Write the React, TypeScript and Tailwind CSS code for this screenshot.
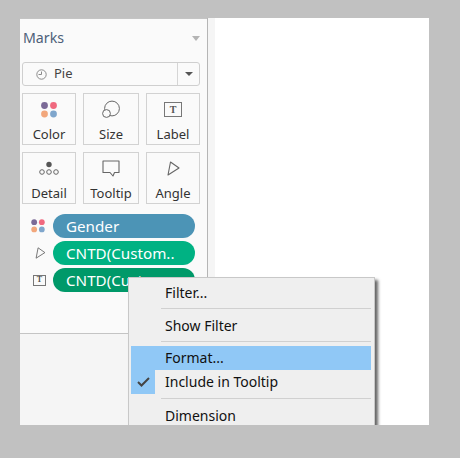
const font = { fontFamily: '"Noto Sans", "Open Sans", sans-serif' };

function Dots({ size = 1 }: { size?: number }) {
  return (
    <svg width={18} height={18} viewBox="0 0 18 18" style={{ transform: `scale(${size})` }}>
      <circle cx="4.5" cy="4.5" r="3.4" fill="#7b6a97" />
      <circle cx="13.5" cy="4.5" r="3.4" fill="#f0697f" />
      <circle cx="4.5" cy="13" r="3.4" fill="#f2a77c" />
      <circle cx="13.5" cy="13" r="3.4" fill="#7fa6cc" />
    </svg>
  );
}

function SizeIcon() {
  return (
    <svg width={20} height={20} viewBox="0 0 20 20" fill="none" stroke="#666" strokeWidth="1">
      <circle cx="11" cy="8.5" r="7.4" />
      <circle cx="5.5" cy="13.5" r="3.9" fill="#fafafa" />
    </svg>
  );
}

function LabelIcon() {
  return (
    <div
      className="w-[18px] h-[15px] flex items-center justify-center border-[1.5px] border-[#777] text-[#555] font-bold text-[10px] leading-none"
      style={{ fontFamily: '"Liberation Serif", serif' }}
    >
      T
    </div>
  );
}

function SmallLabelIcon() {
  return (
    <div
      className="w-[13px] h-[11px] flex items-center justify-center border border-[#777] text-[#555] font-bold text-[8px] leading-none"
      style={{ fontFamily: '"Liberation Serif", serif' }}
    >
      T
    </div>
  );
}

function DetailIcon() {
  return (
    <svg width={20} height={16} viewBox="0 0 20 16" fill="none" stroke="#666" strokeWidth="1">
      <circle cx="10" cy="3.5" r="2.7" fill="#555" stroke="none" />
      <circle cx="3" cy="11" r="2.3" />
      <circle cx="10" cy="11" r="2.3" />
      <circle cx="17" cy="11" r="2.3" />
    </svg>
  );
}

function TooltipIcon() {
  return (
    <svg width={18} height={17} viewBox="0 0 18 17" fill="none" stroke="#666" strokeWidth="1.1">
      <path d="M1 1h16v11.5h-4.5l-1.5 3.5-3-3.5h-7z" strokeLinejoin="round" />
    </svg>
  );
}

function AngleIcon({ w = 13, h = 15 }: { w?: number; h?: number }) {
  return (
    <svg width={w} height={h} viewBox="0 0 13 15" fill="none" stroke="#666" strokeWidth="1.1">
      <path d="M3.5 1l8.5 6-11 7z" strokeLinejoin="round" />
    </svg>
  );
}

function MarkCard({ icon, label }: { icon: React.ReactNode; label: string }) {
  return (
    <div className="h-[52px] flex flex-col items-center border border-[#d2d2d2] bg-[#fafafa]">
      <div className="h-[31px] flex items-center justify-center">{icon}</div>
      <div className="mt-[1px] text-[13px] leading-[17px] text-[#333]">{label}</div>
    </div>
  );
}

function Pill({ icon, label, color }: { icon: React.ReactNode; label: string; color: string }) {
  return (
    <div className="flex items-center h-[24px] gap-[6px]">
      <div className="w-[25px] flex justify-end">{icon}</div>
      <div className={`w-[142px] h-[24px] rounded-full text-white text-[15.2px] leading-[24px] pl-[13px] whitespace-nowrap overflow-hidden ${color}`}>
        {label}
      </div>
    </div>
  );
}

function Sep({ className = "" }: { className?: string }) {
  return <div className={`h-px ml-[32px] mr-[3px] bg-[#d0d0d0] ${className}`} />;
}

function MenuItem({ label, className = "" }: { label: string; className?: string }) {
  return <div className={`h-[24px] text-[14px] leading-[24px] text-[#111] ${className}`}>{label}</div>;
}

export default function App() {
  return (
    <div className="w-[460px] h-[458px] bg-[#c1c1c1] pl-[20px] pt-[18px] overflow-hidden" style={font}>
      <div className="relative w-[409px] h-[407px] flex bg-white overflow-hidden">
        <div className="w-[188px] h-full flex flex-col bg-[#f5f5f5] border-r border-[#b5b5b5]">
          <div className="h-[316px] bg-[#fafafa] border-t border-b border-[#c4c4c4] px-[2px]">
            <div className="h-[43px] pb-[5px] flex items-center justify-between pr-[3px]">
              <div className="pl-[1px] text-[14.2px] text-[#4d6078]">Marks</div>
              <div className="w-0 h-0 border-l-[4px] border-r-[4px] border-t-[5px] border-l-transparent border-r-transparent border-t-[#b4b4b4] mr-[2px]" />
            </div>
            <div className="w-[178px] h-[24px] flex border border-[#cfcfcf] rounded-[3px] bg-[#fafafa]">
              <div className="flex-1 flex items-center pl-[13px] gap-[7px] border-r border-[#d5d5d5]">
                <svg width={11} height={11} viewBox="0 0 11 11" fill="none" stroke="#8a8a8a" strokeWidth="1">
                  <circle cx="5.5" cy="5.5" r="4.7" />
                  <path d="M5.5 5.5V2.5M5.5 5.5H2.5" />
                </svg>
                <span className="text-[13px] text-[#444]">Pie</span>
              </div>
              <div className="w-[21px] flex items-center justify-center">
                <div className="w-0 h-0 border-l-[4px] border-r-[4px] border-t-[4px] border-l-transparent border-r-transparent border-t-[#555]" />
              </div>
            </div>
            <div className="w-[178px] mt-[7px] grid grid-cols-[54px_56px_54px] gap-x-[7px] gap-y-[7px] justify-between">
              <MarkCard icon={<Dots />} label="Color" />
              <MarkCard icon={<SizeIcon />} label="Size" />
              <MarkCard icon={<LabelIcon />} label="Label" />
              <MarkCard icon={<DetailIcon />} label="Detail" />
              <MarkCard icon={<TooltipIcon />} label="Tooltip" />
              <MarkCard icon={<AngleIcon />} label="Angle" />
            </div>
            <div className="mt-[10px] flex flex-col gap-[3px]">
              <Pill icon={<Dots size={0.85} />} label="Gender" color="bg-[#4c94b6]" />
              <Pill icon={<div className="pr-[1px] flex"><AngleIcon w={11} h={12} /></div>} label="CNTD(Custom.." color="bg-[#00b283]" />
              <Pill icon={<div className="pr-[1px]"><SmallLabelIcon /></div>} label="CNTD(Custom.." color="bg-[#009969]" />
            </div>
          </div>
        </div>
        <div className="w-[7px] h-full bg-[#f5f5f5]" />
        <div className="absolute left-[108px] top-[259px] w-[247px] h-[170px] bg-[#efefef] border border-[#c8c8c8] shadow-[3px_3px_3px_#666] pt-[2px]">
          <MenuItem label="Filter..." className="h-[26px] leading-[26px] pl-[36px]" />
          <Sep className="mt-[2px]" />
          <MenuItem label="Show Filter" className="mt-[5px] pl-[36px]" />
          <Sep className="mt-[3px]" />
          <div className="mt-[4px] ml-[2px] mr-[3px] relative">
            <MenuItem label="Format..." className="bg-[#90c8f6] pl-[34px]" />
            <MenuItem label="Include in Tooltip" className="pl-[34px]" />
            <div className="absolute left-0 top-[24px] w-[24px] h-[24px] bg-[#90c8f6] flex items-center justify-center">
              <svg width={13} height={10} viewBox="0 0 13 10" fill="none" stroke="#444" strokeWidth="2">
                <path d="M1 5l3.5 3.5L12 1" />
              </svg>
            </div>
          </div>
          <Sep className="mt-[4px]" />
          <MenuItem label="Dimension" className="mt-[5px] pl-[36px]" />
        </div>
      </div>
    </div>
  );
}
